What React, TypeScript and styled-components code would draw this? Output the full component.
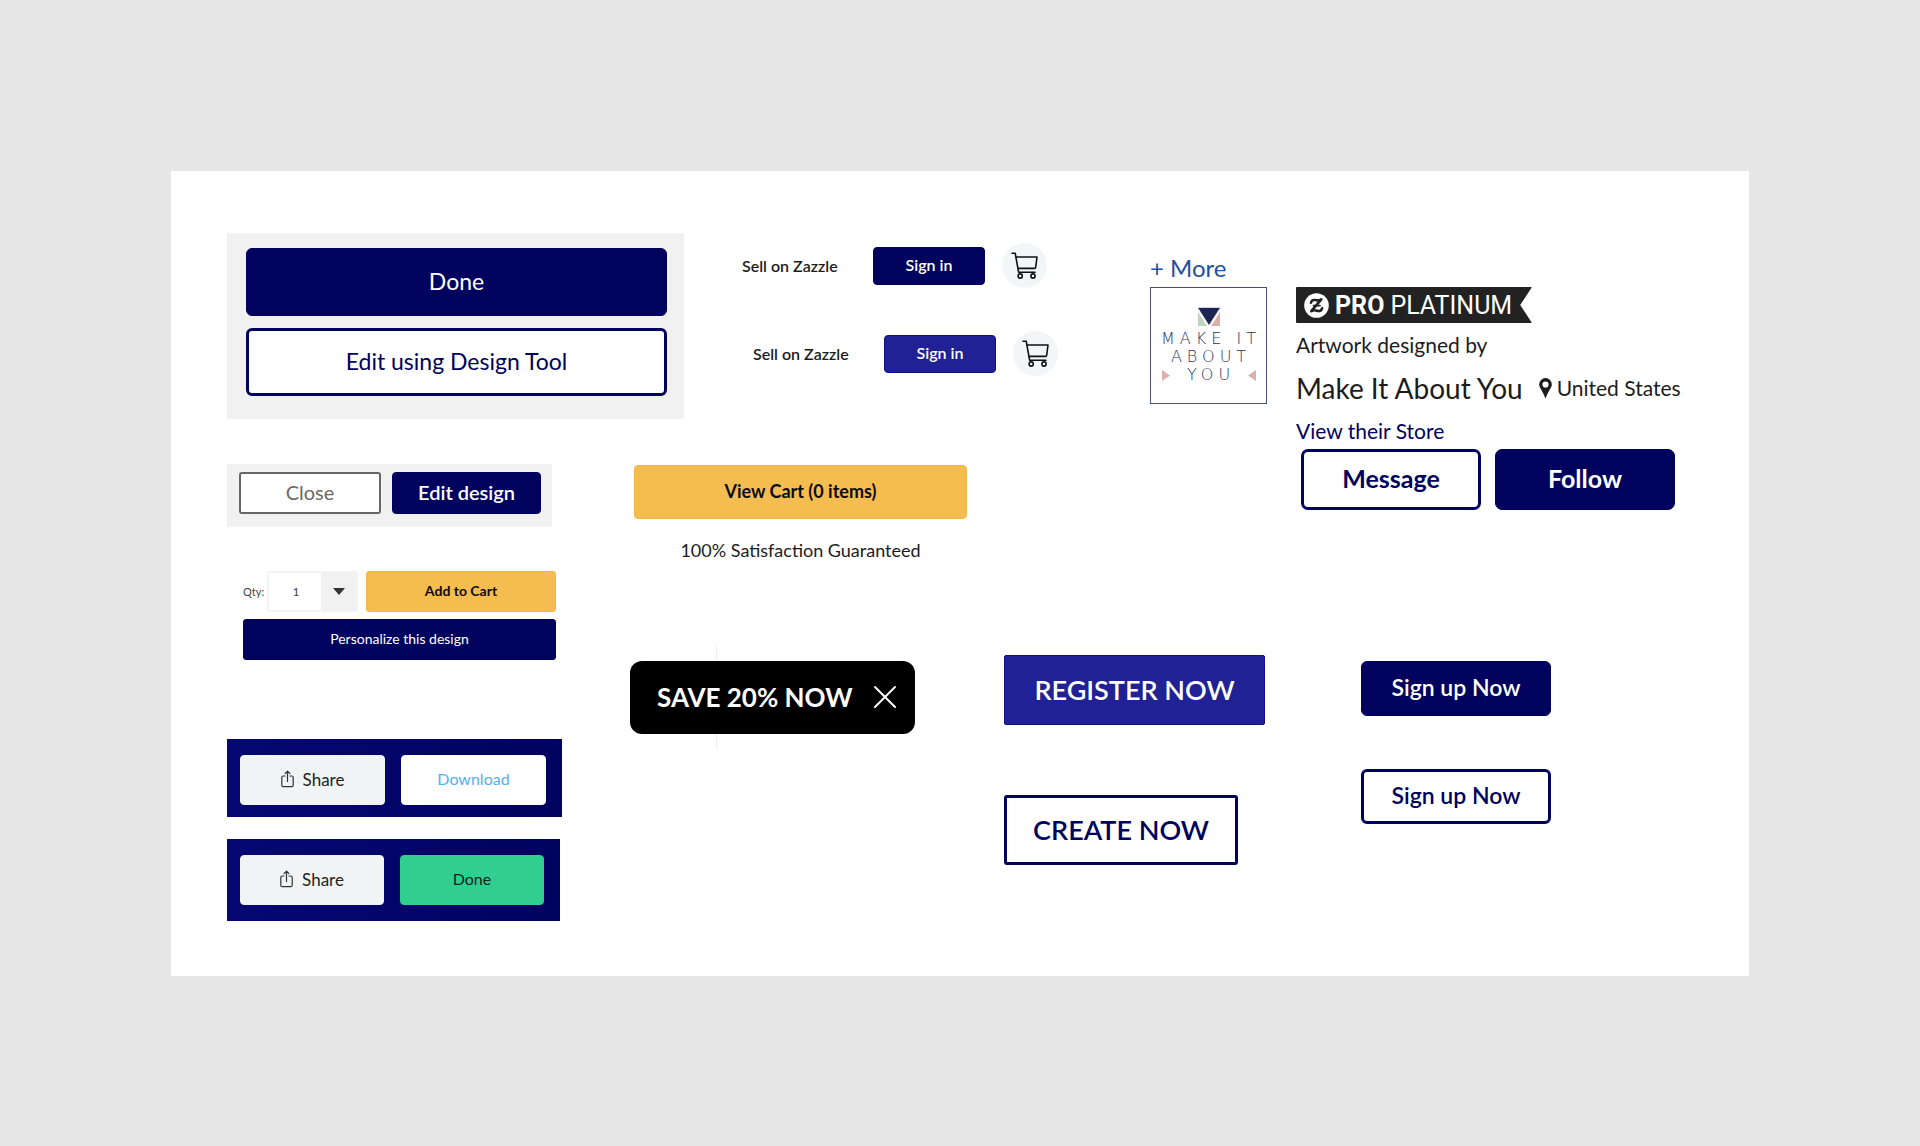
import React from "react";
import styled, { createGlobalStyle, css } from "styled-components";

const navy = "#00025e";
const indigo = "#1f2195";
const amber = "#f5bc4f";
const ink = "#1c1c1c";

const GlobalStyle = createGlobalStyle`
  *, *::before, *::after { box-sizing: border-box; }
  body {
    margin: 0;
    background: #e6e6e6;
    color: ${ink};
    font-family: Lato, "Liberation Sans", sans-serif;
  }
  button, select { font-family: inherit; margin: 0; }
  button { cursor: pointer; }
  a { text-decoration: none; }
`;

const Page = styled.main`
  padding: 171px 171px 170px;
`;

const Card = styled.div`
  background: #fff;
  padding: 62px 65px 55px 56px;
`;

const TopArea = styled.section`
  display: flex;
  justify-content: space-between;
  align-items: flex-start;
`;

const Showcase = styled.div`
  display: grid;
  gap: 45px;
`;

const ShowcaseRow = styled.div<{ $gap: number }>`
  display: flex;
  align-items: flex-start;
  gap: ${(p) => p.$gap}px;
`;

type Tone = "navy" | "indigo" | "amber" | "navyLine" | "greyLine" | "mist" | "white" | "green";

const tones: Record<Tone, ReturnType<typeof css>> = {
  navy: css`background: ${navy}; color: #fff; border-color: ${navy};`,
  indigo: css`background: ${indigo}; color: #fff; border-color: #10108c;`,
  amber: css`background: ${amber}; color: #0c0c0c; border-color: #f3b745;`,
  navyLine: css`background: #fff; color: ${navy}; border-color: ${navy};`,
  greyLine: css`background: #fff; color: #6a6a6a; border-color: #666;`,
  mist: css`background: #f1f4f5; color: #222; border-color: #f1f4f5;`,
  white: css`background: #fff; color: #56aef5; border-color: #fff;`,
  green: css`background: #30cf90; color: #10241c; border-color: #30cf90;`,
};

const Button = styled.button<{
  $tone: Tone;
  $w: string;
  $h: number;
  $size: number;
  $weight?: number;
  $radius?: number;
  $line?: number;
}>`
  display: flex;
  align-items: center;
  justify-content: center;
  gap: 9px;
  width: ${(p) => p.$w};
  height: ${(p) => p.$h}px;
  padding: 0 0 2px;
  border: ${(p) => p.$line ?? 1}px solid;
  border-radius: ${(p) => p.$radius ?? 4}px;
  font-size: ${(p) => p.$size}px;
  font-weight: ${(p) => p.$weight ?? 400};
  line-height: 1;
  white-space: nowrap;
  ${(p) => tones[p.$tone]}
`;

const StackPanel = styled.div`
  display: grid;
  gap: 12px;
  width: 457px;
  padding: 15px 17px 23px 19px;
  background: #f1f1f1;
`;

const InlinePanel = styled.div`
  display: flex;
  justify-content: space-between;
  width: 325px;
  padding: 8px 11px 13px 12px;
  background: #f1f1f1;
`;

const Accounts = styled.div`
  display: grid;
  gap: 43px;
  padding-top: 10px;
`;

const AccountRow = styled.div<{ $indent?: number }>`
  display: flex;
  align-items: center;
  margin-left: ${(p) => p.$indent ?? 0}px;
`;

const SellLink = styled.a`
  width: 131px;
  color: ${ink};
  font-size: 16px;
  font-weight: 600;
  white-space: nowrap;
`;

const CartButton = styled.button`
  display: grid;
  place-items: center;
  width: 45px;
  height: 45px;
  margin-left: 17px;
  padding: 0;
  border: 0;
  border-radius: 50%;
  background: #f3f5f7;
`;

const CartSummary = styled.div`
  display: grid;
  gap: 19px;
  width: 333px;
  padding-top: 1px;
`;

const Guarantee = styled.p`
  margin: 0;
  font-size: 18px;
  line-height: 24px;
  text-align: center;
`;

const Designer = styled.aside`
  width: 534px;
  padding-top: 20px;
`;

const MoreLink = styled.a`
  display: block;
  height: 34px;
  color: #2450a0;
  font-size: 24px;
  line-height: 30px;
`;

const DesignerRow = styled.div`
  display: flex;
  align-items: flex-start;
  gap: 29px;
`;

const StoreLogo = styled.div`
  display: grid;
  grid-template-columns: 12px 1fr 12px;
  align-content: start;
  align-items: center;
  justify-items: center;
  width: 117px;
  height: 117px;
  padding: 19px 8px 0 9px;
  border: 1px solid #4a4e7e;
  color: #2b2f63;
`;

const LogoMark = styled.svg`
  grid-column: 1 / -1;
  margin-bottom: 3px;
`;

const LogoLine = styled.span<{ $full?: boolean }>`
  grid-column: ${(p) => (p.$full ? "1 / -1" : "auto")};
  padding-left: 4px;
  font-family: "DejaVu Sans Light", "DejaVu Sans", sans-serif;
  font-size: 16px;
  font-weight: 200;
  line-height: 18px;
  letter-spacing: 5px;
  white-space: nowrap;
`;

const Badge = styled.div`
  display: flex;
  align-items: center;
  width: 236px;
  height: 36px;
  padding-left: 8px;
  border-radius: 1px;
  background: #222;
  clip-path: polygon(0 0, 100% 0, 95% 50%, 100% 100%, 0 100%);
  color: #fff;
  font-family: Roboto, "Liberation Sans", sans-serif;
  font-size: 25px;
  gap: 6px;

  strong { font-weight: 700; }
`;

const Credit = styled.p`
  margin: 0;
  font-size: 21px;
  line-height: 44px;
`;

const StoreLine = styled.div`
  display: flex;
  align-items: center;
  line-height: 42px;
  white-space: nowrap;
`;

const StoreName = styled.span`
  margin-right: 16px;
  font-size: 28px;
`;

const Place = styled.span`
  display: flex;
  align-items: center;
  gap: 5px;
  font-size: 21px;
`;

const StoreLink = styled.a`
  display: block;
  margin: 10px 0 6px;
  color: ${navy};
  font-size: 21px;
  line-height: 24px;
`;

const DesignerActions = styled.div`
  display: flex;
  gap: 14px;
  padding-left: 5px;
`;

const BottomArea = styled.section`
  display: flex;
  align-items: flex-start;
  margin-top: 9px;
`;

const ToolColumn = styled.div`
  width: 335px;
`;

const OrderForm = styled.form`
  display: grid;
  gap: 7px;
  width: 329px;
  padding-left: 16px;
`;

const OrderRow = styled.div`
  display: flex;
  align-items: center;
`;

const QtyLabel = styled.label`
  width: 24px;
  color: #444;
  font-size: 11px;
`;

const SelectBox = styled.div`
  position: relative;
  margin-right: 8px;

  svg {
    position: absolute;
    top: 17px;
    right: 13px;
    pointer-events: none;
  }
`;

const QtySelect = styled.select`
  display: block;
  width: 91px;
  height: 41px;
  padding: 0 37px 0 4px;
  border: 2px solid #f3f3f3;
  border-radius: 3px;
  appearance: none;
  background: linear-gradient(to right, #fff 52px, #f1f1f1 52px);
  color: #444;
  font-size: 12px;
  text-align: center;
  text-align-last: center;
`;

const ActionBar = styled.div<{ $w: number; $h: number; $top: number }>`
  display: flex;
  gap: 16px;
  width: ${(p) => p.$w}px;
  height: ${(p) => p.$h}px;
  margin-top: ${(p) => p.$top}px;
  padding: 16px 16px 0 13px;
  background: linear-gradient(to right, #060873, #00025f);
`;

const BannerSlot = styled.div`
  position: relative;
  margin: 74px 0 0 68px;
  padding: 16px 0 15px;

  &::before {
    content: "";
    position: absolute;
    top: 0;
    bottom: 0;
    left: 86px;
    width: 1px;
    background: #ececec;
  }
`;

const Banner = styled.div`
  position: relative;
  display: flex;
  align-items: center;
  justify-content: space-between;
  width: 285px;
  height: 73px;
  padding: 0 18px 2px 27px;
  border-radius: 12px;
  background: #000;
  color: #fff;
  font-size: 26px;
  font-weight: 700;
  white-space: nowrap;
`;

const CloseButton = styled.button`
  display: flex;
  padding: 0;
  border: 0;
  background: none;
`;

const CtaColumn = styled.div<{ $top: number; $left: number; $gap: number; $w: number }>`
  display: grid;
  justify-items: start;
  gap: ${(p) => p.$gap}px;
  width: ${(p) => p.$w}px;
  margin: ${(p) => p.$top}px 0 0 ${(p) => p.$left}px;
`;

const CartIcon = () => (
  <svg width="27" height="27" viewBox="0 0 27 27" fill="none" stroke="#111" strokeWidth="1.6" strokeLinecap="round" strokeLinejoin="round" aria-hidden="true">
    <path d="M1 1.2h3.2L7.6 20.200H24" />
    <path d="M4.900 5H26l-1.300 10.200c-.1.800-.6 1.200-1.400 1.200H6.900" />
    <circle cx="9.200" cy="24" r="2.100" />
    <circle cx="22" cy="24" r="2.100" />
  </svg>
);

const ShareIcon = () => (
  <svg width="13" height="18" viewBox="0 0 13 18" fill="none" stroke="#333" strokeWidth="1.200" strokeLinecap="round" strokeLinejoin="round" aria-hidden="true">
    <path d="M4 6H2.200C1.300 6 .8 6.500.8 7.400v7.800c0 .9.500 1.500 1.400 1.500h8.600c.9 0 1.400-.6 1.400-1.500V7.400c0-.9-.5-1.400-1.400-1.400H9" />
    <path d="M6.500 11.500V1.500M4.200 3.500l2.300-2.300 2.300 2.300" />
  </svg>
);

const PinIcon = () => (
  <svg width="13" height="21" viewBox="0 0 13 21" aria-hidden="true">
    <path fill="#1c1c1c" fillRule="evenodd" d="M6.500 0A6.300 6.300 0 0 0 .2 6.400C.2 9.500 3 11.500 6.500 20.500 10 11.500 12.800 9.500 12.800 6.400A6.300 6.300 0 0 0 6.500 0Zm0 3.400a3.100 3.100 0 1 1 0 6.200 3.100 3.100 0 0 1 0-6.200Z" />
  </svg>
);

const ZazzleIcon = () => (
  <svg width="25" height="25" viewBox="0 0 25 25" aria-hidden="true">
    <circle cx="12.500" cy="12.500" r="12.300" fill="#fff" />
    <path d="M7 9.800c.5-2.300 2.100-3.200 4.200-2.700 2.100.5 4 .5 6.100-.8L7.300 18.200c2.200-1.500 4-1.100 5.700-.5 2.300.9 4.500.1 5.100-2.500" fill="none" stroke="#222" strokeWidth="2.600" strokeLinecap="round" strokeLinejoin="round" />
    <path d="M9.500 12.600h6.500" stroke="#222" strokeWidth="1.800" strokeLinecap="round" />
  </svg>
);

const Sell = ({ tone, indent }: { tone: Tone; indent?: number }) => (
  <AccountRow $indent={indent}>
    <SellLink href="#sell">Sell on Zazzle</SellLink>
    <Button $tone={tone} $w="112px" $h={38} $size={16} $weight={600}>Sign in</Button>
    <CartButton aria-label="Cart"><CartIcon /></CartButton>
  </AccountRow>
);

export default function App() {
  return (
    <Page>
      <GlobalStyle />
      <Card>
        <TopArea>
          <Showcase>
            <ShowcaseRow $gap={58}>
              <StackPanel>
                <Button $tone="navy" $w="100%" $h={68} $size={23} $radius={6}>Done</Button>
                <Button $tone="navyLine" $w="100%" $h={68} $size={23} $radius={6} $line={3}>Edit using Design Tool</Button>
              </StackPanel>
              <Accounts>
                <Sell tone="navy" />
                <Sell tone="indigo" indent={11} />
              </Accounts>
            </ShowcaseRow>
            <ShowcaseRow $gap={82}>
              <InlinePanel>
                <Button $tone="greyLine" $w="142px" $h={42} $size={20} $radius={3} $line={2}>Close</Button>
                <Button $tone="navy" $w="149px" $h={42} $size={20} $weight={600}>Edit design</Button>
              </InlinePanel>
              <CartSummary>
                <Button $tone="amber" $w="100%" $h={54} $size={18} $weight={700}>View Cart (0 items)</Button>
                <Guarantee>100% Satisfaction Guaranteed</Guarantee>
              </CartSummary>
            </ShowcaseRow>
          </Showcase>

          <Designer>
            <MoreLink href="#more">+ More</MoreLink>
            <DesignerRow>
              <StoreLogo>
                <LogoMark width="24" height="20" viewBox="0 0 24 20" aria-hidden="true">
                  <path d="M1 5v14h9z" fill="#bfd3bf" />
                  <path d="M23 5v14h-9z" fill="#dcaeac" />
                  <path d="M.5.500h23L12 18.500z" fill="#1d2352" stroke="#fff" strokeWidth=".6" />
                </LogoMark>
                <LogoLine $full>MAKE IT</LogoLine>
                <LogoLine $full>ABOUT</LogoLine>
                <svg width="8" height="11" viewBox="0 0 8 11" aria-hidden="true"><path d="M0 0l8 5.500L0 11z" fill="#dcaeac" /></svg>
                <LogoLine>YOU</LogoLine>
                <svg width="8" height="11" viewBox="0 0 8 11" aria-hidden="true"><path d="M8 0L0 5.500 8 11z" fill="#dcaeac" /></svg>
              </StoreLogo>
              <div>
                <Badge>
                  <ZazzleIcon />
                  <strong>PRO</strong>
                  <span>PLATINUM</span>
                </Badge>
                <Credit>Artwork designed by</Credit>
                <StoreLine>
                  <StoreName>Make It About You</StoreName>
                  <Place><PinIcon />United States</Place>
                </StoreLine>
                <StoreLink href="#store">View their Store</StoreLink>
                <DesignerActions>
                  <Button $tone="navyLine" $w="180px" $h={61} $size={25} $weight={700} $radius={7} $line={3}>Message</Button>
                  <Button $tone="navy" $w="180px" $h={61} $size={25} $weight={700} $radius={7}>Follow</Button>
                </DesignerActions>
              </div>
            </DesignerRow>
          </Designer>
        </TopArea>

        <BottomArea>
          <ToolColumn>
            <OrderForm onSubmit={(e) => e.preventDefault()}>
              <OrderRow>
                <QtyLabel htmlFor="qty">Qty:</QtyLabel>
                <SelectBox>
                  <QtySelect id="qty" defaultValue="1">
                    <option value="1">1</option>
                    <option value="2">2</option>
                    <option value="3">3</option>
                  </QtySelect>
                  <svg width="12" height="7" viewBox="0 0 12 7" aria-hidden="true"><path d="M0 0h12L6 7z" fill="#333" /></svg>
                </SelectBox>
                <Button $tone="amber" $w="190px" $h={41} $size={14} $weight={700} $radius={3}>Add to Cart</Button>
              </OrderRow>
              <Button $tone="navy" $w="100%" $h={41} $size={14} $radius={3}>Personalize this design</Button>
            </OrderForm>
            <ActionBar $w={335} $h={78} $top={79}>
              <Button $tone="mist" $w="145px" $h={50} $size={17}><ShareIcon />Share</Button>
              <Button $tone="white" $w="145px" $h={50} $size={16}>Download</Button>
            </ActionBar>
            <ActionBar $w={333} $h={82} $top={22}>
              <Button $tone="mist" $w="144px" $h={50} $size={17}><ShareIcon />Share</Button>
              <Button $tone="green" $w="144px" $h={50} $size={16}>Done</Button>
            </ActionBar>
          </ToolColumn>

          <BannerSlot>
            <Banner>
              <span>SAVE 20% NOW</span>
              <CloseButton aria-label="Dismiss">
                <svg width="24" height="24" viewBox="0 0 24 24" stroke="#fff" strokeWidth="2" strokeLinecap="round" aria-hidden="true">
                  <path d="M2 2l20 20M22 2L2 22" />
                </svg>
              </CloseButton>
            </Banner>
          </BannerSlot>

          <CtaColumn $top={84} $left={89} $gap={70} $w={261}>
            <Button $tone="indigo" $w="261px" $h={70} $size={27} $weight={600} $radius={2}>REGISTER NOW</Button>
            <Button $tone="navyLine" $w="234px" $h={70} $size={27} $weight={600} $radius={3} $line={3}>CREATE NOW</Button>
          </CtaColumn>

          <CtaColumn $top={90} $left={96} $gap={53} $w={190}>
            <Button $tone="navy" $w="190px" $h={55} $size={23} $weight={600} $radius={6}>Sign up Now</Button>
            <Button $tone="navyLine" $w="190px" $h={55} $size={23} $weight={600} $radius={6} $line={3}>Sign up Now</Button>
          </CtaColumn>
        </BottomArea>
      </Card>
    </Page>
  );
}
